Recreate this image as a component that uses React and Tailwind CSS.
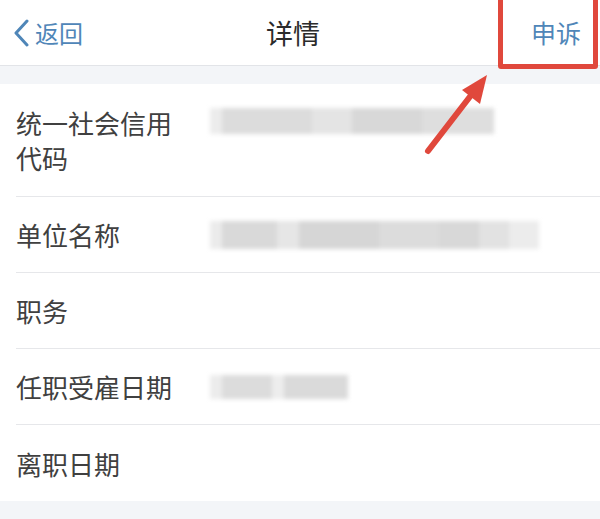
import React from 'react';

const font = { fontFamily: '"Noto Sans CJK SC", "Noto Sans", sans-serif' };

const Blur = ({ blocks }) => (
  <div className="flex items-center blur-[2px]">
    {blocks.map((b, i) => (
      <div key={i} className={b} />
    ))}
  </div>
);

const Row = ({ label, children, last, tall }) => (
  <div className={`ml-4 flex ${tall ? 'items-start py-[21px]' : 'items-center h-[76px]'} ${last ? '' : 'border-b border-[#e6e7ea]'}`}>
    <div className="w-[178px] shrink-0 text-[26px] leading-[35px] text-[#404040]">{label}</div>
    <div className={`ml-4 ${tall ? 'mt-[3px]' : ''}`}>{children}</div>
  </div>
);

export default function App() {
  return (
    <div className="relative w-[600px] h-[519px] overflow-hidden bg-[#f3f5f8]" style={font}>
      {/* nav bar */}
      <div className="h-[66px] bg-white border-b border-[#e2e4e8] grid grid-cols-3 items-center px-[13px]">
        <div className="flex items-center text-[#4f86b8]">
          <svg width="18" height="28" viewBox="0 0 18 28" fill="none" stroke="currentColor" strokeWidth="3" strokeLinecap="round" strokeLinejoin="round">
            <path d="M14 2 L3 14 L14 26" />
          </svg>
          <span className="ml-[4px] text-[24px] leading-none">返回</span>
        </div>
        <div className="text-[27px] text-[#2b2b2b] leading-none text-center pr-[14px]">详情</div>
        <div className="text-[25px] text-[#4f86b8] leading-none text-right pr-[6px]">申诉</div>
      </div>

      <div className="h-[18px]" />

      <div className="bg-white">
        <Row label="统一社会信用代码" tall>
          <Blur
            blocks={[
              'w-[12px] h-[26px] bg-[#ececec]',
              'w-[90px] h-[26px] bg-[#dcdcdc]',
              'w-[40px] h-[26px] bg-[#e4e4e4]',
              'w-[70px] h-[26px] bg-[#d8d8d8]',
              'w-[72px] h-[26px] bg-[#dedede]',
            ]}
          />
        </Row>
        <Row label="单位名称">
          <Blur
            blocks={[
              'w-[12px] h-[28px] bg-[#ebebeb]',
              'w-[55px] h-[28px] bg-[#d9d9d9]',
              'w-[22px] h-[28px] bg-[#e6e6e6]',
              'w-[80px] h-[28px] bg-[#d6d6d6]',
              'w-[60px] h-[28px] bg-[#dcdcdc]',
              'w-[40px] h-[28px] bg-[#d8d8d8]',
              'w-[30px] h-[28px] bg-[#e2e2e2]',
              'w-[30px] h-[28px] bg-[#ececec]',
            ]}
          />
        </Row>
        <Row label="职务" />
        <Row label="任职受雇日期">
          <Blur
            blocks={[
              'w-[12px] h-[24px] bg-[#ececec]',
              'w-[50px] h-[24px] bg-[#dcdcdc]',
              'w-[12px] h-[24px] bg-[#ededed]',
              'w-[64px] h-[24px] bg-[#dadada]',
            ]}
          />
        </Row>
        <Row label="离职日期" last />
      </div>

      {/* highlight box */}
      <div className="absolute left-[498px] top-[-8px] w-[100px] h-[77px] border-[5px] border-[#e0483c] rounded-[3px]" />

      {/* arrow */}
      <svg className="absolute left-0 top-0" width="600" height="519" viewBox="0 0 600 519">
        <line x1="428" y1="151" x2="472" y2="94" stroke="#e0483c" strokeWidth="6" strokeLinecap="round" />
        <polygon points="487,75 462,90 480,104" fill="#e0483c" />
      </svg>
    </div>
  );
}
